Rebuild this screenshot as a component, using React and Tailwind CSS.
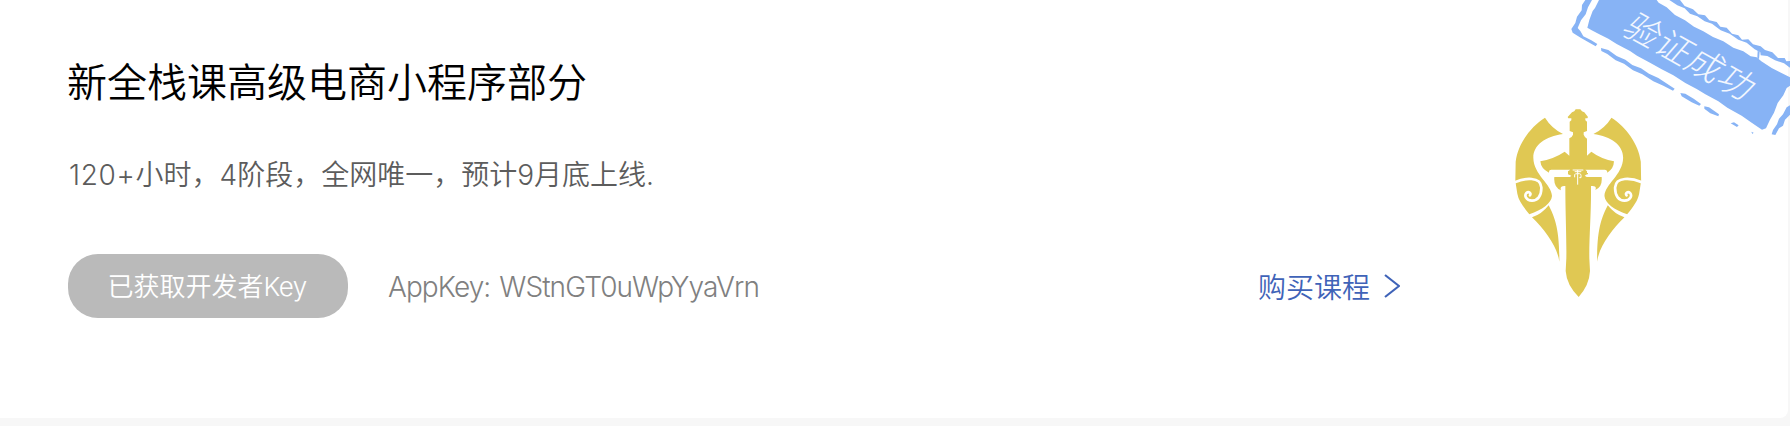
function Wing() {
  return (
    <>
      <path
        fill="#e0c853"
        d="M165 68 Q184 99 219 117 C166 124 130 150 130 188 C131 240 185 267 186 303 C184 325 157 344 118 358 C98 333 86 317 82 296 L76 258 L77 200 C84 146 121 96 165 68Z"
      />
      <path
        fill="none"
        stroke="#fff"
        strokeWidth="8"
        strokeLinecap="round"
        d="M76 261 C104 249 152 244 154 277 C155 304 142 317 126 317 C107 317 103 301 109 294 C116 288 125 294 120 301"
      />
      <path
        fill="#e0c853"
        d="M176 331 C193 365 209 398 208 500 C202 455 165 405 126 367 Q155 358 176 331Z"
      />
    </>
  );
}

function SwordLogo() {
  return (
    <svg className="block h-[190px] w-[127px]" viewBox="75 39 381 570">
      <Wing />
      <g transform="matrix(-1 0 0 1 529.4 0)">
        <Wing />
      </g>
      <path
        fill="#e0c853"
        d="M257 43 H271 Q275 50 283 52 L294 66 L292 70 H286 V76 L291 80 V108 L281 112 V119 Q284 127 291 131 V182 L304 170 Q332 191 372 199 Q371 222 352 233 Q352 224 344 224 H286 L291 229 V234 H294 V238 H291 L284 242 L290 246 H335 Q338 277 316 285 Q322 271 303 273 C304 350 297 430 298 490 L300 528 Q298 570 266 606 Q230 570 227 528 L229 490 C230 430 226 350 226 273 Q208 271 213 286 Q190 277 193 246 H240 L244 242 L234 238 V229 L241 224 H184 Q176 224 177 233 Q153 222 151 199 Q193 191 224 170 L238 182 V130 Q246 127 249 119 V112 L239 108 V80 L244 76 V70 H235 L233 66 L246 52 Q254 50 257 43Z"
      />
      <path
        fill="none"
        stroke="#fff"
        strokeWidth="3"
        d="M248 225 H280 M254 230 H274 M263 225 V269 M254 247 V239 Q254 236 262 236 H268 Q273 236 273 241 V248 H268"
      />
    </svg>
  );
}

function Stamp() {
  return (
    <div className="relative h-[140px] w-[230px] overflow-hidden">
      <svg className="block h-[140px] w-[230px]" viewBox="0 0 690 420">
        <g fill="#87b3f5">
          <path d="M117 0 L105 24 L98 33 L88 60 L82 83 L95 91 L118 103 L145 116 L170 132 L210 153 L231 167 L270 188 L305 208 L340 226 L376 249 L410 267 L436 283 L475 304 L502 323 L545 347 L575 368 L606 389 L618 385 L630 359 L642 338 L653 309 L670 286 L680 264 L690 257 V232 L660 217 L635 204 L604 184 L590 172 L572 169 L550 154 L520 143 L490 124 L459 111 L430 94 L402 80 L375 61 L345 45 L320 22 L296 8 L290 0Z" />
          <path d="M76 0 L66 15 L65 31 L51 50 L46 69 L34 87 L38 98 L62 113 L83 125 L107 139 L112 132 L94 121 L70 109 L61 93 L53 84 L63 61 L77 43 L84 22 L96 0Z" />
          <path d="M328 0 L352 16 L374 25 L390 41 L412 49 L434 64 L456 71 L482 91 L509 101 L535 119 L560 128 L584 148 L601 157 L602 166 L622 168 L645 181 L672 190 L690 203 V183 L679 184 L674 174 L654 174 L637 157 L615 150 L602 139 L579 133 L565 118 L546 119 L535 106 L516 101 L500 83 L481 80 L470 66 L448 61 L435 46 L415 43 L399 28 L374 18 L360 0Z" />
          <path d="M593 152 L599 155 L597 178 L592 174Z" />
          <path d="M123 144 L145 150 L170 168 L196 179 L217 195 L243 205 L267 221 L295 234 L344 266 L339 272 L310 257 L280 244 L247 223 L219 211 L192 191 L167 181 L142 162 L124 153Z" />
          <path d="M361 279 L376 281 L401 296 L423 312 L418 317 L395 307 L365 289Z M433 319 L447 322 L477 343 L475 349 L451 340 L433 326Z M512 370 L522 367 L536 376 L531 381Z M574 395 L581 398 L577 402Z" />
          <path d="M690 316 L680 322 L669 343 L657 356 L651 373 L639 390 L635 403 L646 405 L657 385 L669 377 L675 359 L690 344Z" />
        </g>
      </svg>
      <div className="absolute top-[54.5px] left-[132px] w-[160px] -translate-x-1/2 -translate-y-1/2">
        <div className="rotate-[29deg] -skew-x-12 text-center font-['Noto_Sans_CJK_SC',sans-serif] text-[35px] leading-[40px] font-light tracking-[0.5px] whitespace-nowrap text-white/90">
          验证成功
        </div>
      </div>
    </div>
  );
}

export default function App() {
  return (
    <div className="relative h-[426px] w-full overflow-hidden bg-[#f7f7f7] pr-[2px] font-[Inter,'Noto_Sans_CJK_SC',sans-serif]">
      <div className="flex h-[418px] rounded-br-lg bg-white pl-[67px]">
        <div className="flex w-[1448px] flex-col">
          <h1 className="mt-[53px] text-[40px] leading-[60px] font-[350] text-black">
            新全栈课高级电商小程序部分
          </h1>
          <p className="mt-[42px] pl-[2px] text-[28px] leading-[40px] font-[350] text-[#5c5c5c]">
            <span className="tracking-[0.7px]">120+</span>小时，4阶段，全网唯一，预计9月底上线.
          </p>
          <div className="mt-[59px] flex h-16 items-center">
            <button className="ml-px h-16 w-[280px] rounded-[30px] bg-[#bababa] pt-px pr-[2px] text-[26px] font-[350] text-white">
              已获取开发者<span className="tracking-[-0.6px]">Key</span>
            </button>
            <span className="ml-10 w-[372px] pt-px text-[28px] font-[350] tracking-[-0.92px] whitespace-nowrap text-[#808080]">
              AppKey:<span className="ml-[2px]"> WStnGT0uWpYyaVrn</span>
            </span>
            <a className="mr-[115px] ml-auto flex items-center text-[28px] font-[350] text-[#3f63b8]">
              <span className="pt-[4px]">购买课程</span>
              <svg className="ml-[14px] h-6 w-4" viewBox="0 0 16 24" fill="none" stroke="currentColor" strokeWidth="2.2">
                <path d="M1 1 L15 12 L1 23" />
              </svg>
            </a>
          </div>
        </div>
        <div className="mt-[108px]">
          <SwordLogo />
        </div>
      </div>
      <div className="absolute top-0 right-0">
        <Stamp />
      </div>
    </div>
  );
}
